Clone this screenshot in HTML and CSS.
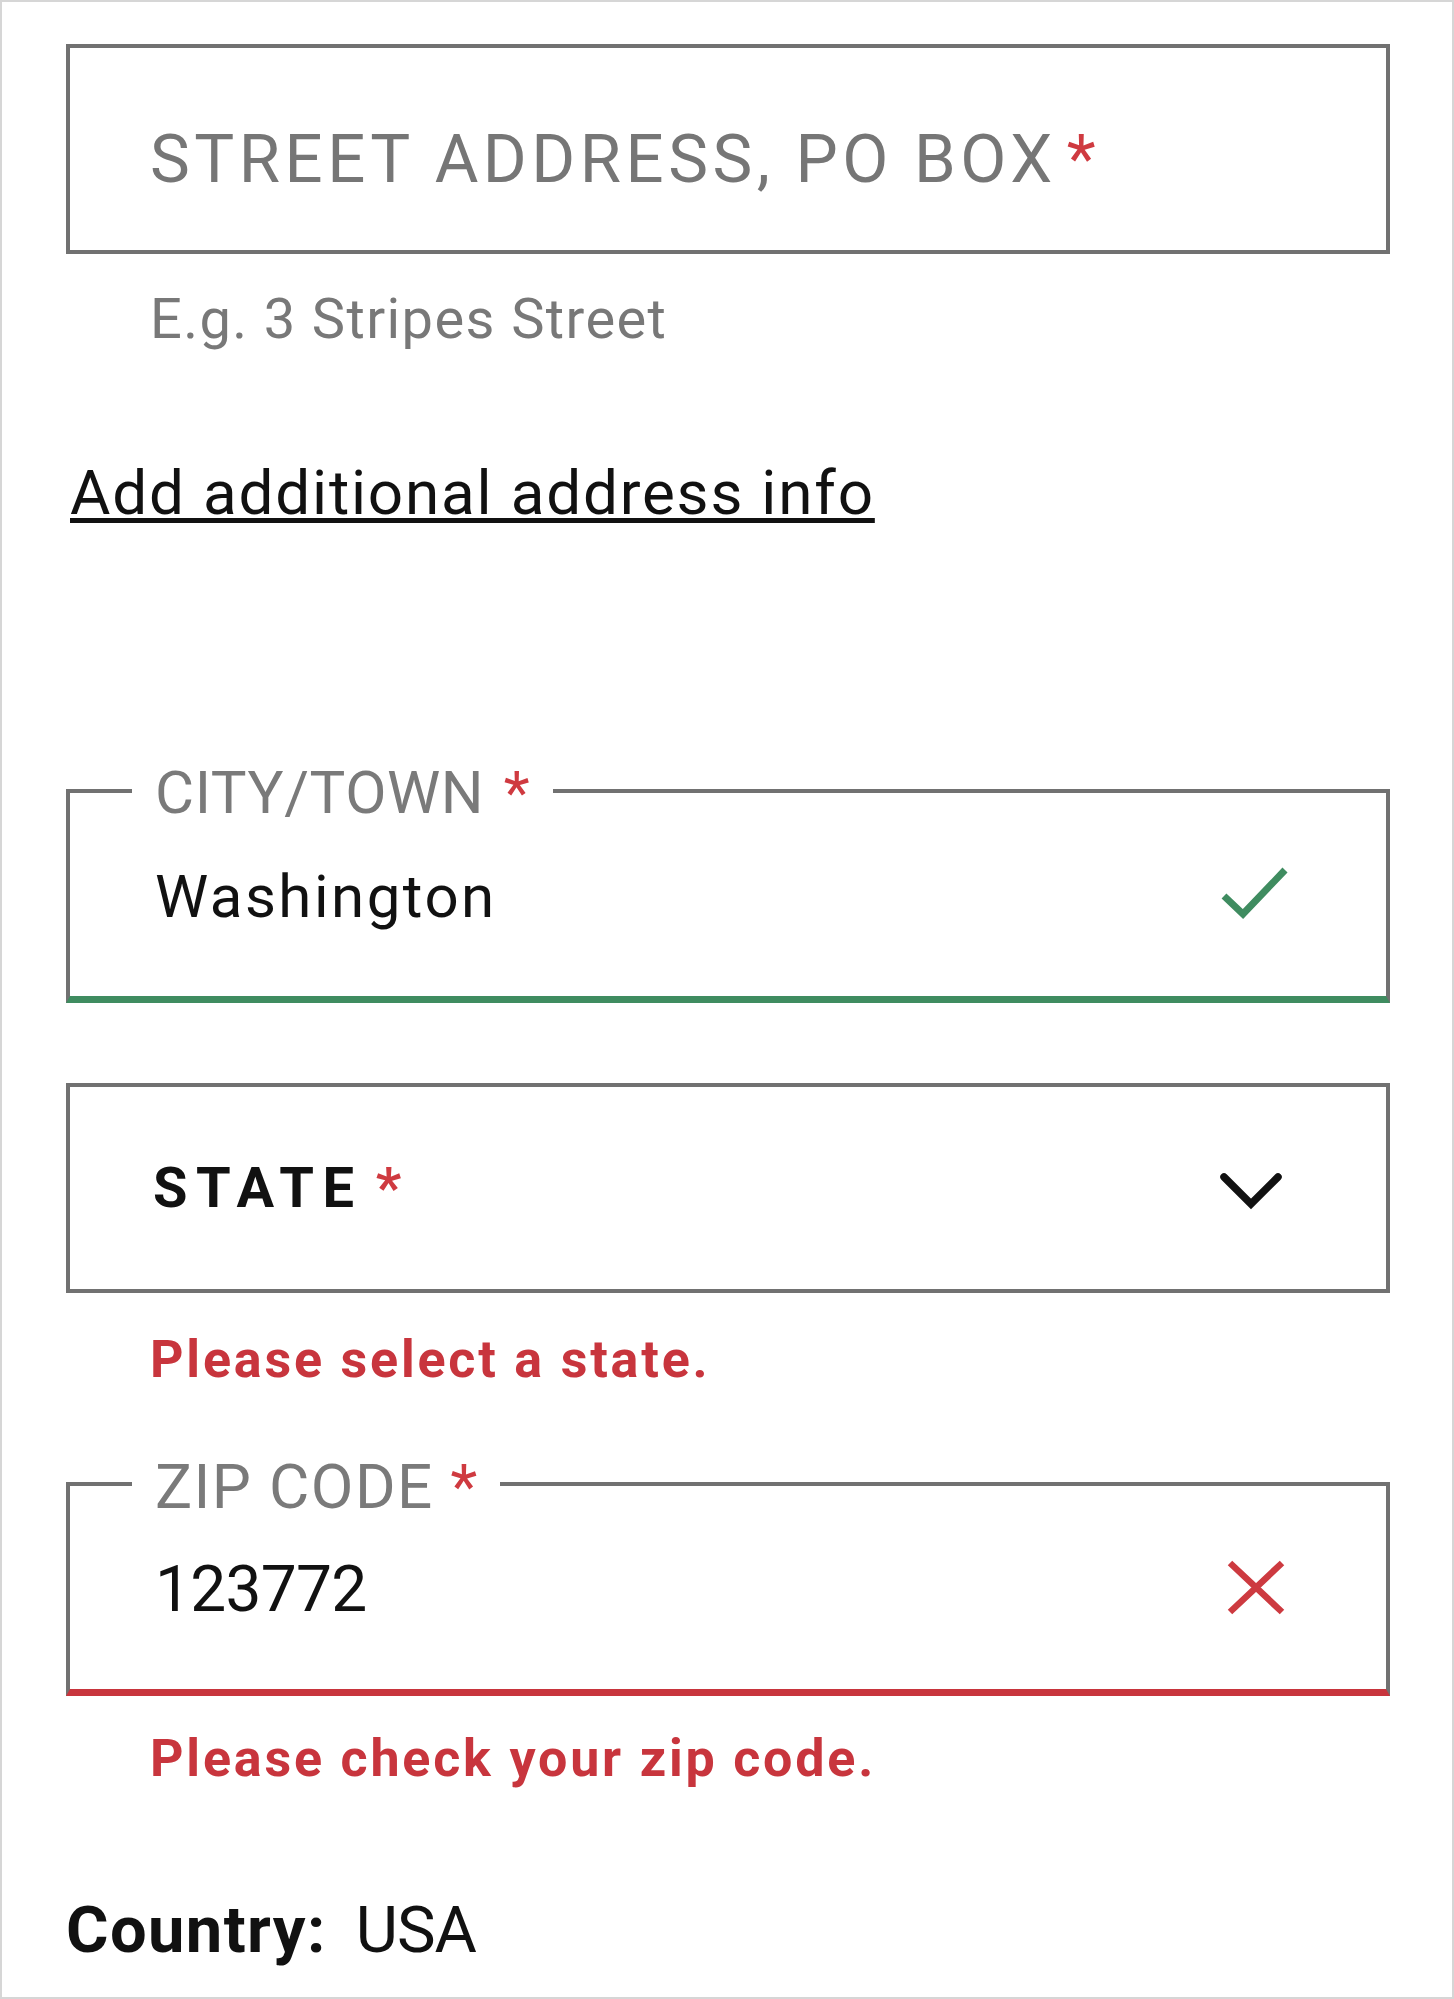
FILE: index.html
```html
<!DOCTYPE html>
<html lang="en">
<head>
<meta charset="utf-8">
<title>Address form</title>
<link rel="stylesheet" href="styles.css">
</head>
<body>
<div class="page">
  <div class="field-box street">
    <span class="placeholder">STREET ADDRESS, PO BOX</span><span class="req req-lg">*</span>
  </div>
  <div class="hint">E.g. 3 Stripes Street</div>
  <div class="link-row"><a class="more-link" href="#">Add additional address info</a></div>

  <fieldset class="float-field city">
    <legend class="float-label"><span>CITY/TOWN</span> <span class="req">*</span></legend>
    <div class="value-row">
      <span class="value">Washington</span>
      <svg class="icon" width="80" height="64" viewBox="1214 866 80 64" aria-hidden="true"><path d="M1224 897 L1243 915 L1285 871" fill="none" stroke="#3f8c60" stroke-width="7" stroke-linejoin="miter"/></svg>
    </div>
  </fieldset>

  <div class="field-box select">
    <span class="select-label"><span class="spaced">STATE</span><span class="req">*</span></span>
    <svg class="icon" width="74" height="64" viewBox="1214 1156 74 64" aria-hidden="true"><path d="M1224 1177 L1251 1204 L1278 1177" fill="none" stroke="#111" stroke-width="7.5" stroke-linecap="round" stroke-linejoin="miter"/></svg>
  </div>
  <div class="error">Please select a state.</div>

  <fieldset class="float-field zip">
    <legend class="float-label"><span>ZIP CODE</span> <span class="req">*</span></legend>
    <div class="value-row">
      <span class="value">123772</span>
      <svg class="icon" width="80" height="64" viewBox="1214 1558 80 64" aria-hidden="true"><path d="M1230 1563 L1282 1612 M1282 1563 L1230 1612" fill="none" stroke="#cd3a40" stroke-width="6.5"/></svg>
    </div>
  </fieldset>
  <div class="error error-zip">Please check your zip code.</div>

  <div class="country"><span class="country-key">Country:</span> <span class="country-value">USA</span></div>
</div>
</body>
</html>
```

FILE: styles.css
```css
html, body {
  margin: 0;
  background: #ffffff;
}

.page {
  box-sizing: border-box;
  width: 1454px;
  height: 1999px;
  border: 2px solid #d6d6d6;
  padding: 42px 62px 0 64px;
  background: #ffffff;
  font-family: Roboto, "DejaVu Sans", sans-serif;
  color: #111111;
}

.req {
  color: #cf3a40;
  letter-spacing: 0;
}

.field-box {
  box-sizing: border-box;
  height: 210px;
  border: 4px solid #717171;
}

.street {
  padding: 78px 0 0 80px;
  font-size: 67px;
  line-height: 67px;
  white-space: nowrap;
}

.placeholder {
  color: #767676;
  letter-spacing: 4.5px;
}

.req-lg {
  margin-left: 10px;
}

.hint {
  margin-top: 37px;
  padding-left: 84px;
  font-size: 56px;
  line-height: 56px;
  letter-spacing: 1.4px;
  color: #787878;
}

.link-row {
  margin-top: 115px;
  padding-left: 4px;
  font-size: 62px;
  line-height: 62px;
  letter-spacing: 1.8px;
}

.more-link {
  color: #111111;
  text-decoration: underline;
  text-decoration-thickness: 5px;
  text-underline-offset: 4px;
}

.float-field {
  min-width: 0;
  margin: 0;
  padding: 0;
  border: 4px solid #717171;
}

.float-label {
  margin-left: 62px;
  padding: 4px 23px 0 23px;
  font-size: 60px;
  line-height: 60px;
  letter-spacing: 0.6px;
  color: #7a7a7a;
}

.float-label .req {
  margin-left: 4px;
}

.value-row {
  display: flex;
  align-items: center;
  justify-content: space-between;
  height: 64px;
  padding: 0 92px 0 85px;
}

.icon {
  display: block;
  flex: none;
}

.city {
  margin-top: 235px;
  padding-top: 42px;
  padding-bottom: 67px;
  border-bottom: 7px solid #3f8c60;
}

.city .value {
  font-size: 60px;
  line-height: 60px;
  letter-spacing: 2.5px;
}

.select {
  margin-top: 80px;
  display: flex;
  align-items: center;
  justify-content: space-between;
  padding: 0 98px 0 83px;
}

.select-label {
  font-size: 56px;
  line-height: 56px;
  font-weight: 700;
  color: #111111;
}

.select-label .spaced {
  letter-spacing: 8.6px;
}

.select-label .req {
  margin-left: 13px;
}

.error {
  margin-top: 41px;
  padding-left: 84px;
  font-size: 52px;
  line-height: 52px;
  font-weight: 700;
  letter-spacing: 2.8px;
  color: #c8353d;
}

.zip {
  margin-top: 64px;
  padding-top: 40px;
  padding-bottom: 67px;
  border-bottom: 7px solid #c8353d;
}

.zip .float-label {
  padding-top: 6px;
  font-size: 62px;
  line-height: 62px;
  letter-spacing: 1.4px;
}

.zip .float-label .req {
  margin-left: 0;
}

.zip .value {
  font-size: 64px;
  line-height: 64px;
  letter-spacing: -0.7px;
}

.error-zip {
  margin-top: 37px;
}

.country {
  margin-top: 113px;
  padding-left: 0;
  font-size: 65px;
  line-height: 65px;
  color: #111111;
}

.country-key {
  font-weight: 700;
  letter-spacing: 1.4px;
}

.country-value {
  margin-left: 13px;
  letter-spacing: -1px;
}
```
